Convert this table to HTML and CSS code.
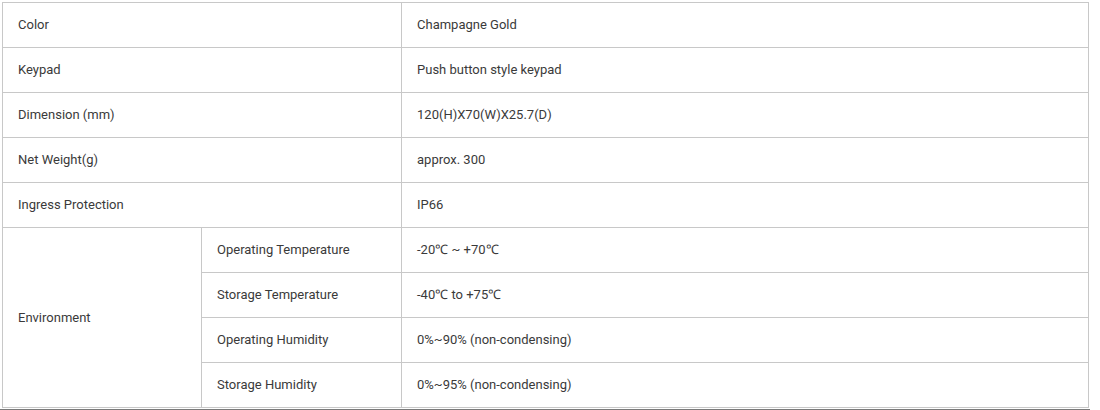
FILE: index.html
```html
<!DOCTYPE html>
<html>
<head>
<meta charset="utf-8">
<link rel="stylesheet" href="styles.css">
</head>
<body>
<div class="wrap">
<table class="spec">
<colgroup><col class="c1"><col class="c2"><col class="c3"></colgroup>
<tr><td colspan="2">Color</td><td>Champagne Gold</td></tr>
<tr><td colspan="2">Keypad</td><td>Push button style keypad</td></tr>
<tr><td colspan="2">Dimension (mm)</td><td>120(H)X70(W)X25.7(D)</td></tr>
<tr><td colspan="2">Net Weight(g)</td><td>approx. 300</td></tr>
<tr><td colspan="2">Ingress Protection</td><td>IP66</td></tr>
<tr><td rowspan="4">Environment</td><td>Operating Temperature</td><td>-20℃ ~ +70℃</td></tr>
<tr><td>Storage Temperature</td><td>-40℃ to +75℃</td></tr>
<tr><td>Operating Humidity</td><td>0%~90% (non-condensing)</td></tr>
<tr><td>Storage Humidity</td><td>0%~95% (non-condensing)</td></tr>
</table>
<div class="rule"></div>
</div>
</body>
</html>
```
FILE: styles.css
```css
html, body { margin: 0; padding: 0; background: #fff; }
.wrap { padding: 2px 0 0 2px; width: 1088px; }
.spec {
  border-collapse: collapse;
  table-layout: fixed;
  width: 1086px;
  font-family: Roboto, "Liberation Sans", sans-serif;
  font-size: 13px;
  color: #3a3a3a;
}
.c1 { width: 199px; }
.c2 { width: 200px; }
.c3 { width: 687px; }
.spec td {
  border: 1px solid #c8c8c8;
  height: 45px;
  padding: 0 0 0 15px;
  box-sizing: border-box;
  vertical-align: middle;
  line-height: 16px;
}
.rule { height: 3px; background: #7a7a7a; margin-top: 1px; width: 1090px; margin-left: -2px; }
```
